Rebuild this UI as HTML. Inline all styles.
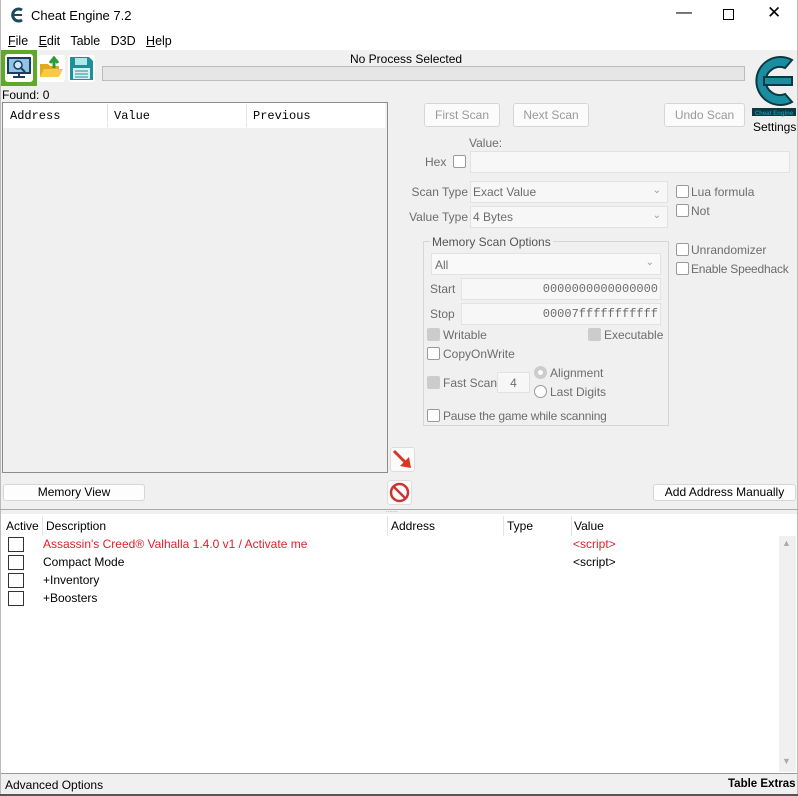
<!DOCTYPE html>
<html><head><meta charset="utf-8"><style>
*{box-sizing:border-box;margin:0;padding:0}
body{width:798px;height:796px;overflow:hidden;background:#f0f0f0;font-family:"Liberation Sans",sans-serif;font-size:12px;color:#000;position:relative}
.a{position:absolute;white-space:nowrap}
.r{position:absolute;white-space:nowrap;text-align:right}
.btn{position:absolute;background:#fbfbfb;border:1px solid #d6d6d6;border-radius:3px;text-align:center;color:#9a9a9a}
.inp{position:absolute;background:#f7f7f7;border:1px solid #e2e2e2}
.cb{position:absolute;width:13px;height:13px;border:1px solid #9a9a9a;border-radius:2px;background:#fff}
.g{color:#6d6d6d}
.mono{font-family:"Liberation Mono",monospace}
.dd{position:absolute;right:6px;top:3px;color:#999;font-size:10px}
</style></head><body>
<div class="a" style="left:0;top:0;width:798px;height:50px;background:#fff"></div>
<div class="a" style="left:0;top:0;width:1px;height:796px;background:#bbb"></div>
<div class="a" style="left:797px;top:0;width:1px;height:796px;background:#bbb"></div>
<svg class="a" style="left:9px;top:7px" width="16" height="16" viewBox="0 0 16 16"><path d="M13 3 A6 6 0 1 0 13 13" fill="none" stroke="#1b4a5a" stroke-width="3"/><rect x="5" y="7" width="8" height="2" fill="#1b4a5a"/></svg>
<div class="a" style="left:31px;top:8px;font-size:13px">Cheat Engine 7.2</div>
<div class="a" style="left:676px;top:4px;font-size:16px">&#8212;</div>
<div class="a" style="left:723px;top:9px;width:11px;height:11px;border:1px solid #000"></div>
<div class="a" style="left:767px;top:3px;font-size:17px">&#10005;</div>
<div class="a" style="left:8px;top:34px;font-size:12.5px"><u>F</u>ile&nbsp;&nbsp; <u>E</u>dit&nbsp;&nbsp; Table&nbsp;&nbsp; D3D&nbsp;&nbsp; <u>H</u>elp</div>
<div class="a" style="left:1px;top:50px;width:36px;height:36px;background:#5fa82a"></div>
<div class="a" style="left:5px;top:54px;width:28px;height:28px;background:#fff;border-radius:3px"></div>
<svg class="a" style="left:7px;top:57px" width="24" height="22" viewBox="0 0 24 22"><rect x="1" y="1" width="22" height="15" fill="#8fc4e8" stroke="#1d3d5a" stroke-width="2"/><circle cx="11" cy="8" r="4" fill="#cfe6f7" stroke="#1d3d5a" stroke-width="1.5"/><path d="M14 11 L18 15 M12 16 V19 M6 20 H18" stroke="#1d3d5a" stroke-width="2"/></svg>
<div class="a" style="left:38px;top:55px;width:27px;height:27px;background:#fff;border-radius:3px"></div>
<svg class="a" style="left:39px;top:56px" width="25" height="24" viewBox="0 0 25 24"><path d="M1 8 H9 L11 10 H20 V21 H1Z" fill="#e2a820"/><path d="M1 21 L5 13 H24 L20 21Z" fill="#f7c94a"/><path d="M15 12 V4 M11 7 L15 2 L19 7" stroke="#2b9a3a" stroke-width="3" fill="none"/></svg>
<div class="a" style="left:68px;top:55px;width:27px;height:27px;background:#fff;border-radius:3px"></div>
<svg class="a" style="left:69px;top:56px" width="25" height="25" viewBox="0 0 25 25"><path d="M1 1 H20 L24 5 V24 H1Z" fill="#1f8f99"/><rect x="6" y="2" width="12" height="7" fill="#b7e4e8"/><rect x="4" y="12" width="17" height="11" fill="#d6f0f2"/><path d="M6 15H19M6 18H19M6 21H19" stroke="#1f8f99"/></svg>
<div class="a" style="left:350px;top:52px">No Process Selected</div>
<div class="a" style="left:102px;top:66px;width:643px;height:15px;background:#e6e6e6;border:1px solid #bcbcbc"></div>
<svg class="a" style="left:750px;top:50px" width="48" height="68" viewBox="0 0 48 68"><g fill="#1a8ea0" stroke="#0b3942" stroke-width="2"><path d="M42 10 A24 24 0 1 0 42 52 L35 44 A14 14 0 1 1 35 18Z"/><rect x="14" y="27" width="28" height="8"/></g><rect x="2" y="58" width="44" height="8" fill="#0b3942"/><text x="24" y="65" font-size="6" fill="#1a8ea0" text-anchor="middle" font-family="Liberation Sans" font-weight="bold">Cheat Engine</text></svg>
<div class="a" style="left:753px;top:120px">Settings</div>
<div class="a" style="left:2px;top:88px">Found: 0</div>
<div class="a" style="left:2px;top:102px;width:386px;height:371px;background:#f0f0f0;border:1px solid #8c8c8c"></div>
<div class="a" style="left:3px;top:103px;width:382px;height:25px;background:#fff"></div>
<div class="a mono" style="left:10px;top:109px;font-size:12px">Address</div>
<div class="a" style="left:107px;top:104px;width:1px;height:23px;background:#e5e5e5"></div>
<div class="a mono" style="left:114px;top:109px">Value</div>
<div class="a" style="left:246px;top:104px;width:1px;height:23px;background:#e5e5e5"></div>
<div class="a mono" style="left:253px;top:109px">Previous</div>
<div class="btn" style="left:424px;top:103px;width:76px;height:24px;line-height:22px">First Scan</div>
<div class="btn" style="left:513px;top:103px;width:76px;height:24px;line-height:22px">Next Scan</div>
<div class="btn" style="left:664px;top:103px;width:81px;height:24px;line-height:22px">Undo Scan</div>
<div class="a g" style="left:469px;top:136px">Value:</div>
<div class="a g" style="left:425px;top:155px">Hex</div>
<div class="cb" style="left:453px;top:155px"></div>
<div class="inp" style="left:470px;top:151px;width:320px;height:22px"></div>
<div class="r g" style="right:330px;top:185px">Scan Type</div>
<div class="inp" style="left:470px;top:181px;width:198px;height:22px"><span class="a g" style="left:2px;top:3px">Exact Value</span><span class="dd">&#8964;</span></div>
<div class="r g" style="right:330px;top:210px">Value Type</div>
<div class="inp" style="left:470px;top:206px;width:198px;height:22px"><span class="a g" style="left:2px;top:3px">4 Bytes</span><span class="dd">&#8964;</span></div>
<div class="cb" style="left:676px;top:185px"></div><div class="a g" style="left:691px;top:185px">Lua formula</div>
<div class="cb" style="left:676px;top:204px"></div><div class="a g" style="left:691px;top:204px">Not</div>
<div class="cb" style="left:676px;top:243px"></div><div class="a g" style="left:691px;top:243px">Unrandomizer</div>
<div class="cb" style="left:676px;top:262px"></div><div class="a g" style="left:691px;top:262px;letter-spacing:-0.2px">Enable Speedhack</div>
<div class="a" style="left:423px;top:241px;width:246px;height:185px;border:1px solid #d6d6d6"></div>
<div class="a" style="left:430px;top:235px;background:#f0f0f0;color:#555;padding:0 2px">Memory Scan Options</div>
<div class="inp" style="left:431px;top:253px;width:230px;height:22px;background:#f9f9f9"><span class="a g" style="left:3px;top:4px">All</span><span class="dd">&#8964;</span></div>
<div class="a g" style="left:430px;top:282px">Start</div>
<div class="inp mono g" style="left:461px;top:278px;width:200px;height:22px;text-align:right;padding:3px 2px">0000000000000000</div>
<div class="a g" style="left:430px;top:307px">Stop</div>
<div class="inp mono g" style="left:461px;top:303px;width:200px;height:22px;text-align:right;padding:3px 2px">00007fffffffffff</div>
<div class="cb" style="left:427px;top:328px;background:#ccc;border-color:#ccc"></div><div class="a g" style="left:443px;top:328px">Writable</div>
<div class="cb" style="left:588px;top:328px;background:#ccc;border-color:#ccc"></div><div class="a g" style="left:604px;top:328px">Executable</div>
<div class="cb" style="left:427px;top:347px"></div><div class="a g" style="left:443px;top:347px">CopyOnWrite</div>
<div class="cb" style="left:427px;top:376px;background:#ccc;border-color:#ccc"></div><div class="a g" style="left:443px;top:376px">Fast Scan</div>
<div class="inp g" style="left:497px;top:372px;width:33px;height:21px;text-align:center;padding-top:3px">4</div>
<div class="a" style="left:534px;top:366px;width:13px;height:13px;border-radius:50%;border:4px solid #ccc;background:#fff"></div><div class="a g" style="left:550px;top:366px">Alignment</div>
<div class="a" style="left:534px;top:385px;width:13px;height:13px;border-radius:50%;border:1px solid #999;background:#fff"></div><div class="a g" style="left:550px;top:385px">Last Digits</div>
<div class="cb" style="left:427px;top:409px"></div><div class="a g" style="left:443px;top:409px;letter-spacing:-0.2px">Pause the game while scanning</div>
<div class="a" style="left:390px;top:447px;width:25px;height:25px;background:#fbfbfb;border:1px solid #ddd;border-radius:3px"></div>
<svg class="a" style="left:392px;top:449px" width="21" height="21" viewBox="0 0 21 21"><path d="M2 2 L15 15" stroke="#d32" stroke-width="3"/><path d="M19 19 L8 17 L17 8Z" fill="#d32"/></svg>
<div class="a" style="left:387px;top:480px;width:25px;height:25px;background:#fbfbfb;border:1px solid #ddd;border-radius:3px"></div>
<svg class="a" style="left:389px;top:482px" width="21" height="21" viewBox="0 0 21 21"><circle cx="10.5" cy="10.5" r="8.5" fill="none" stroke="#c33" stroke-width="2.5"/><path d="M4.5 4.5 L16.5 16.5" stroke="#c33" stroke-width="2.5"/></svg>
<div class="btn" style="left:3px;top:484px;width:142px;height:17px;line-height:15px;color:#000;background:#fdfdfd">Memory View</div>
<div class="btn" style="left:653px;top:484px;width:143px;height:17px;line-height:15px;color:#000;background:#fdfdfd">Add Address Manually</div>
<div class="a" style="left:0;top:509px;width:798px;height:1px;background:#aaa"></div>
<div class="a" style="left:386px;top:508px;font-size:6px;color:#999">.......</div>
<div class="a" style="left:1px;top:514px;width:796px;height:260px;background:#fff;border-bottom:1px solid #999"></div>
<div class="a" style="left:6px;top:519px">Active</div>
<div class="a" style="left:42px;top:516px;width:1px;height:20px;background:#e5e5e5"></div>
<div class="a" style="left:46px;top:519px">Description</div>
<div class="a" style="left:387px;top:516px;width:1px;height:20px;background:#e5e5e5"></div>
<div class="a" style="left:391px;top:519px">Address</div>
<div class="a" style="left:503px;top:516px;width:1px;height:20px;background:#e5e5e5"></div>
<div class="a" style="left:507px;top:519px">Type</div>
<div class="a" style="left:571px;top:516px;width:1px;height:20px;background:#e5e5e5"></div>
<div class="a" style="left:574px;top:519px">Value</div>
<div class="a" style="left:779px;top:536px;width:17px;height:236px;background:#f0f0f0"></div>
<div class="a" style="left:782px;top:538px;font-size:9px;color:#aaa">&#9650;</div>
<div class="a" style="left:782px;top:756px;font-size:9px;color:#aaa">&#9660;</div>
<div class="a" style="left:8px;top:537px;width:16px;height:15px;border:1px solid #333"></div>
<div class="a" style="left:43px;top:537px;color:#e0202a">Assassin's Creed® Valhalla 1.4.0 v1 / Activate me</div>
<div class="a" style="left:573px;top:537px;color:#e0202a">&lt;script&gt;</div>
<div class="a" style="left:8px;top:555px;width:16px;height:15px;border:1px solid #333"></div>
<div class="a" style="left:43px;top:555px">Compact Mode</div>
<div class="a" style="left:573px;top:555px">&lt;script&gt;</div>
<div class="a" style="left:8px;top:573px;width:16px;height:15px;border:1px solid #333"></div>
<div class="a" style="left:43px;top:573px">+Inventory</div>
<div class="a" style="left:8px;top:591px;width:16px;height:15px;border:1px solid #333"></div>
<div class="a" style="left:43px;top:591px">+Boosters</div>
<div class="a" style="left:5px;top:778px">Advanced Options</div>
<div class="a" style="left:728px;top:778px;font-weight:bold;font-size:11.5px">Table Extras</div>
<div class="a" style="left:0;top:794px;width:798px;height:2px;background:#555"></div>
</body></html>
